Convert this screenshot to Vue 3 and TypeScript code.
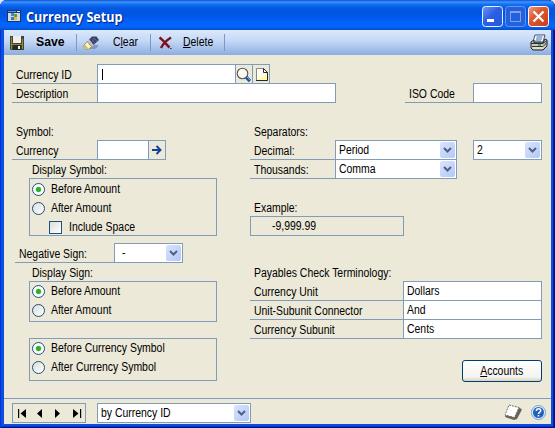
<script setup lang="ts">
import { ref } from 'vue'

interface TermRow {
  label: string
  value: string
}
interface RadioGroup {
  options: string[]
  selected: number
  kind: string
}

const separators = ref<TermRow[]>([
  { label: 'Decimal:', value: 'Period' },
  { label: 'Thousands:', value: 'Comma' },
])
const terms = ref<TermRow[]>([
  { label: 'Currency Unit', value: 'Dollars' },
  { label: 'Unit-Subunit Connector', value: 'And' },
  { label: 'Currency Subunit', value: 'Cents' },
])
const symbolGroup = ref<RadioGroup>({
  options: ['Before Amount', 'After Amount'],
  selected: 0,
  kind: 'tall',
})
const signGroups = ref<RadioGroup[]>([
  { options: ['Before Amount', 'After Amount'], selected: 0, kind: 'sign' },
  { options: ['Before Currency Symbol', 'After Currency Symbol'], selected: 0, kind: 'position' },
])
</script>

<template>
  <div class="window">
    <header class="titlebar">
      <svg class="app-icon" width="14" height="12" viewBox="0 0 14 12">
        <rect width="14" height="12" fill="#18366f" />
        <rect x="1" y="1" width="8" height="1" fill="#6d95d8" />
        <rect x="10" y="1" width="3" height="1" fill="#dce8fa" />
        <rect x="1" y="3" width="12" height="8" fill="#d5d9dc" />
        <rect x="4" y="3" width="3" height="3" fill="#3c8fc4" />
        <rect x="7" y="4" width="3" height="3" fill="#51a04b" />
        <rect x="4" y="7" width="3" height="3" fill="#2f78cf" />
        <rect x="7" y="7" width="3" height="3" fill="#e8b63b" />
      </svg>
      <span class="title">Currency Setup</span>
      <div class="controls">
        <svg width="21" height="21" viewBox="0 0 21 21">
          <defs>
            <linearGradient id="gb" x1="0" y1="0" x2="1" y2="1">
              <stop offset="0" stop-color="#6f99f5" /><stop offset=".45" stop-color="#2b60e4" /><stop offset="1" stop-color="#2858dc" />
            </linearGradient>
          </defs>
          <rect x=".5" y=".5" width="20" height="20" rx="3" fill="url(#gb)" stroke="#e9f0ff" />
          <rect x="5" y="13" width="7" height="3" fill="#fff" />
        </svg>
        <svg width="21" height="21" viewBox="0 0 21 21">
          <rect x=".5" y=".5" width="20" height="20" rx="3" fill="#2462dc" stroke="#6895f2" />
          <path d="M5.500 5.500h10v10h-10z" fill="none" stroke="#7f9ff0" />
          <path d="M5 6h11" stroke="#7f9ff0" stroke-width="2" />
        </svg>
        <svg width="21" height="21" viewBox="0 0 21 21">
          <defs>
            <linearGradient id="gr" x1="0" y1="0" x2="1" y2="1">
              <stop offset="0" stop-color="#f0a08a" /><stop offset=".4" stop-color="#e0572f" /><stop offset="1" stop-color="#c83c15" />
            </linearGradient>
          </defs>
          <rect x=".5" y=".5" width="20" height="20" rx="3" fill="url(#gr)" stroke="#fff" />
          <path d="M5.500 5.500l10 10M15.500 5.500l-10 10" stroke="#fff" stroke-width="2.300" />
        </svg>
      </div>
    </header>

    <nav class="toolbar">
      <svg class="i-save" width="14" height="14" viewBox="0 0 14 14">
        <path d="M0 0h14v14H1L0 13z" fill="#45442c" />
        <path d="M1 1h1v12H1zM12 3h1v10h-1zM2 8h10v1H2z" fill="#8b8944" />
        <rect x="3" y="0" width="8" height="7" fill="#eeeeea" />
        <rect x="3" y="9" width="8" height="5" fill="#292923" />
        <rect x="8" y="10" width="2" height="3" fill="#f4f4f0" />
      </svg>
      <span class="t save">Save</span>
      <i class="sep" />
      <svg class="i-clear" width="17" height="14" viewBox="0 0 17 14">
        <path d="M6 13l5-4h5l-2 2h1l-3 2z" fill="#8698ba" />
        <path d="M9 .5h4.500L16 4l-5.500 5L6 3.500z" fill="#39426f" />
        <path d="M10 2l4 3M8.500 3.500l3 3" stroke="#66749f" fill="none" />
        <path d="M6 3.500L10.500 9l-2 1.800L4 5.500z" fill="#c3c1b3" />
        <path d="M4 5.500l4.500 5.300-3 2.400H2L.5 10z" fill="#faf5c8" stroke="#77745c" stroke-width=".7" />
        <path d="M.5 10.500l2-1.500 2.500 3-1 1.500H2z" fill="#d9bd5a" />
      </svg>
      <span class="t clear">C<u>l</u>ear</span>
      <i class="sep" />
      <svg class="i-delete" width="15" height="14" viewBox="0 0 15 14">
        <path d="M1.500 1.500C5 4 8 8 11.500 11.500M13 1.500C9 4 5 8 3 12" fill="none" stroke="#7d1220" stroke-width="2.500" />
        <path d="M12 12.500h1.500" stroke="#333" />
      </svg>
      <span class="t delete"><u>D</u>elete</span>
      <i class="sep" />
      <svg class="i-print" width="18" height="17" viewBox="0 0 18 17">
        <path d="M5 1h10l-2 7H3z" fill="#fff" stroke="#2a3f68" stroke-width=".9" />
        <path d="M6.500 3h6M6 5h6M5 7h6" stroke="#3f64ae" />
        <path d="M1 8l3-2v3h9l2-4 2 1v6l-4 4H3l-2-2z" fill="#c9c9bf" stroke="#222" />
        <path d="M1 9.500h12l4-3M2 12.500h11l4-4" stroke="#33332e" fill="none" />
        <path d="M3 14h10" stroke="#f4f4ee" />
        <path d="M8 11h3" stroke="#23a427" stroke-width="1.500" />
      </svg>
    </nav>

    <main class="form">
      <section class="head">
        <div class="row">
          <div class="label w85"><span class="t">Currency ID</span></div>
          <div class="box id-box"><i class="caret" /></div>
          <div class="tool">
            <svg width="16" height="17" viewBox="0 0 16 17">
              <path d="M10 11l4 4" stroke="#1d4fa6" stroke-width="3.200" />
              <path d="M11 11l3 3" stroke="#7ab0ee" />
              <circle cx="6.500" cy="7.500" r="5.300" fill="#fbfaf2" stroke="#55555c" stroke-width="1.100" />
              <path d="M3.500 7a3 3 0 013-3" stroke="#fff" fill="none" />
            </svg>
          </div>
          <div class="tool">
            <svg width="15" height="17" viewBox="0 0 15 17">
              <path d="M2.500 2.500h7l4 4v8h-11z" fill="#fffba8" stroke="#8a8a80" />
              <path d="M3 3h7v5h2v1L4 13H3z" fill="#fffef2" />
              <path d="M2 14.500h11.500V6.500" fill="none" stroke="#26262a" />
              <path d="M9.500 2.500v4h4z" fill="#fffef2" stroke="#26262a" />
            </svg>
          </div>
        </div>
        <div class="row">
          <div class="label w85"><span class="t">Description</span></div>
          <div class="box desc-box" />
          <div class="label iso-label"><span class="t">ISO Code</span></div>
          <div class="box w69" />
        </div>
      </section>

      <div class="columns">
        <section class="left">
          <div class="caption"><span class="t">Symbol:</span></div>
          <div class="row">
            <div class="label w85"><span class="t">Currency</span></div>
            <div class="box sym-box" />
            <div class="tool go">
              <svg width="10" height="10" viewBox="0 0 10 10">
                <path d="M0 5h8M4.500 1l4 4-4 4" fill="none" stroke="#123f9e" stroke-width="1.900" />
              </svg>
            </div>
          </div>
          <div class="caption inner"><span class="t">Display Symbol:</span></div>
          <div class="group" :class="symbolGroup.kind">
            <div v-for="(o, i) in symbolGroup.options" :key="o" class="radio" @click="symbolGroup.selected = i">
              <i class="dot" :class="{ on: i === symbolGroup.selected }" /><span class="t">{{ o }}</span>
            </div>
            <div class="radio check"><i class="tick" /><span class="t">Include Space</span></div>
          </div>
          <div class="row neg">
            <div class="label neg-label"><span class="t">Negative Sign:</span></div>
            <div class="box w69 combo neg-box">
              <span class="t">-</span>
              <i class="drop"><svg width="9" height="6" viewBox="0 0 9 6"><path d="M1 1l3.500 3.500L8 1" /></svg></i>
            </div>
          </div>
          <div class="caption inner"><span class="t">Display Sign:</span></div>
          <div v-for="g in signGroups" :key="g.kind" class="group" :class="g.kind">
            <div v-for="(o, i) in g.options" :key="o" class="radio" @click="g.selected = i">
              <i class="dot" :class="{ on: i === g.selected }" /><span class="t">{{ o }}</span>
            </div>
          </div>
        </section>

        <section class="right">
          <div class="caption"><span class="t">Separators:</span></div>
          <div class="sep-area">
            <div>
              <div v-for="s in separators" :key="s.label" class="row">
                <div class="label w85"><span class="t">{{ s.label }}</span></div>
                <div class="box combo sep-box">
                  <span class="t">{{ s.value }}</span>
                  <i class="drop"><svg width="9" height="6" viewBox="0 0 9 6"><path d="M1 1l3.500 3.500L8 1" /></svg></i>
                </div>
              </div>
            </div>
            <div class="box w69 combo digits">
              <span class="t">2</span>
              <i class="drop"><svg width="9" height="6" viewBox="0 0 9 6"><path d="M1 1l3.500 3.500L8 1" /></svg></i>
            </div>
          </div>
          <div class="caption ex-cap"><span class="t">Example:</span></div>
          <div class="box example"><span class="t">-9,999.99</span></div>
          <div class="caption pay-cap"><span class="t">Payables Check Terminology:</span></div>
          <div v-for="r in terms" :key="r.label" class="row">
            <div class="label term-label"><span class="t">{{ r.label }}</span></div>
            <div class="box term-box"><span class="t">{{ r.value }}</span></div>
          </div>
          <button class="accounts"><span class="t"><u>A</u>ccounts</span></button>
        </section>
      </div>
    </main>

    <footer class="status">
      <div class="pager">
        <svg width="72" height="18" viewBox="0 0 72 18">
          <path d="M5 5h1.200v9H5zM13 5v9L7.500 9.500zM29 5v9l-5-4.500zM42 5v9l5-4.500zM60 5v9l5.500-4.500zM67 5h1.200v9H67z" fill="#000" />
        </svg>
      </div>
      <div class="box combo sort-box">
        <span class="t">by Currency ID</span>
        <i class="drop"><svg width="9" height="6" viewBox="0 0 9 6"><path d="M1 1l3.500 3.500L8 1" /></svg></i>
      </div>
      <svg class="i-note" width="20" height="17" viewBox="0 0 20 17">
        <path d="M5 1.500l10 2 3 2-5 9.500-3 1-9-3z" fill="#65655a" />
        <path d="M5 1l10 2.500-4.500 10L1 11z" fill="#fff" stroke="#65655a" stroke-width=".9" stroke-dasharray="2 1" />
      </svg>
      <svg class="i-help" width="15" height="15" viewBox="0 0 15 15">
        <circle cx="7.500" cy="7.500" r="7" fill="#e8f1fc" stroke="#6fa0d8" />
        <circle cx="7.500" cy="7.500" r="5.500" fill="#2361bd" />
        <path d="M5.300 5.900c0-3 4.400-2.800 4.400-.2 0 1.600-2.200 1.500-2.200 3.300M7.500 10v1.500" fill="none" stroke="#fff" stroke-width="1.500" />
      </svg>
    </footer>
  </div>
</template>

<style>
body {
  margin: 0;
  background: #dfe9f5;
}
</style>

<style scoped>
* {
  box-sizing: border-box;
}
.window {
  width: 555px;
  height: 428px;
  overflow: hidden;
  display: flex;
  flex-direction: column;
  padding: 0 4px 4px;
  background: #0a4fe0;
  border-radius: 7px 7px 0 0;
  box-shadow: inset 1px 0 #0831d9, inset -1px 0 #00138c, inset -2px 0 #001ea0, inset 0 -1px #00138c, inset 0 -2px #0434cc;
  font: 12px/19px "Liberation Sans", Arial, sans-serif;
  color: #000;
}
.t {
  display: inline-block;
  white-space: nowrap;
  transform: scaleX(0.87);
  transform-origin: left center;
}
u {
  text-decoration-thickness: 1px;
  text-underline-offset: 1px;
}
.titlebar {
  height: 30px;
  flex: none;
  margin: 0 -4px;
  display: flex;
  align-items: flex-start;
  padding: 0 6px 0 7px;
  background: linear-gradient(#0f53d0 0, #3f93ff 2px, #1674f5 4px, #0458e2 8px, #0054e3 14px, #0060f6 21px, #0267ff 26px, #0458dc 29px, #0345c5 30px);
}
.app-icon {
  margin-top: 10px;
}
.title {
  margin: 7px 0 0 5px;
  font: bold 14px/20px "Open Sans", "Noto Sans", sans-serif;
  color: #fff;
  text-shadow: 1px 1px 1px #0a1883;
  white-space: nowrap;
  transform: scaleX(0.9);
  transform-origin: left;
}
.controls {
  margin: 6px 0 0 auto;
  display: flex;
  gap: 2px;
}
.toolbar {
  height: 25px;
  flex: none;
  display: flex;
  align-items: center;
  background: linear-gradient(#dce9fc, #c3d7f5 45%, #8dade0);
}
.toolbar > * {
  flex: none;
}
.i-save {
  margin-left: 6px;
}
.save {
  margin-left: 12px;
  width: 40px;
  font-weight: bold;
  transform: scaleX(1.02);
}
.sep {
  width: 1px;
  height: 17px;
  background: #7b99c4;
}
.i-clear {
  margin-left: 6px;
}
.clear {
  margin-left: 13px;
  width: 37px;
}
.i-delete {
  margin-left: 7px;
}
.delete {
  margin-left: 10px;
  width: 41px;
}
.i-print {
  margin: 0 3px 0 auto;
}
.form {
  height: 343px;
  flex: none;
  padding: 9px 9px 0 8px;
  background: #ece9d8;
}
.row {
  display: flex;
  height: 20px;
}
.row + .row {
  margin-top: -1px;
}
.label {
  flex: none;
  height: 20px;
  padding: 2px 0 0 4px;
  border-bottom: 1px solid #7f9db9;
  line-height: 18px;
}
.label .t {
  line-height: 19px;
}
.w85 {
  width: 85px;
}
.w69 {
  width: 69px;
}
.box {
  flex: none;
  height: 20px;
  border: 1px solid #7f9db9;
  background: #fff;
  padding-left: 3px;
  line-height: 18px;
}
.id-box {
  width: 139px;
  padding: 4px 0 0 4px;
}
.caret {
  display: block;
  width: 1px;
  height: 11px;
  background: #000;
}
.desc-box {
  width: 239px;
}
.tool {
  flex: none;
  width: 18px;
  height: 20px;
  margin-left: -1px;
  border: 1px solid #7f9db9;
  display: flex;
  align-items: center;
  justify-content: center;
}
.iso-label {
  width: 68px;
  margin-left: 69px;
}
.columns {
  display: flex;
  justify-content: space-between;
  margin-top: 19px;
}
.left {
  width: 206px;
}
.right {
  width: 292px;
  display: flex;
  flex-direction: column;
}
.caption {
  height: 18px;
  padding-left: 4px;
  line-height: 20px;
}
.inner {
  padding-left: 20px;
}
.sym-box {
  width: 52px;
}
.group {
  margin-left: 17px;
  width: 188px;
  border: 1px solid #7f9db9;
  padding-left: 2px;
}
.tall {
  height: 58px;
  padding-top: 1px;
}
.sign {
  height: 41px;
}
.position {
  height: 43px;
  margin-top: 16px;
}
.radio {
  display: flex;
  align-items: center;
  height: 19px;
  gap: 6px;
}
.check {
  padding-left: 17px;
}
.dot,
.tick {
  flex: none;
  width: 13px;
  height: 13px;
  border: 1px solid #1c5180;
  background: linear-gradient(135deg, #dcdcd7, #fff);
}
.dot {
  border-radius: 50%;
}
.dot.on {
  background: radial-gradient(circle, #2eaf2b 0 2px, #5bc758 2.5px, #fff 3.2px);
}
.tick + .t {
  margin-left: 1px;
}
.neg {
  margin: 7px 0 0 3px;
}
.neg-label {
  width: 99px;
}
.combo {
  display: flex;
  align-items: center;
  justify-content: space-between;
  padding-right: 1px;
}
.neg-box {
  padding-left: 7px;
}
.drop {
  flex: none;
  width: 15px;
  height: 16px;
  border-radius: 2px;
  background: linear-gradient(135deg, #d9e4fd, #b3c8f6);
  display: flex;
  align-items: center;
  justify-content: center;
}
.drop path {
  fill: none;
  stroke: #4d6185;
  stroke-width: 2;
}
.sep-area {
  display: flex;
  justify-content: space-between;
}
.sep-box {
  width: 122px;
}
.ex-cap {
  margin-top: 19px;
}
.example {
  width: 154px;
  padding-left: 21px;
  background: transparent;
}
.pay-cap {
  margin-top: 27px;
}
.term-label {
  width: 153px;
}
.term-box {
  width: 139px;
}
.accounts {
  align-self: flex-end;
  margin-top: 21px;
  width: 80px;
  height: 22px;
  padding: 0;
  border: 1px solid #003c74;
  border-radius: 3px;
  background: linear-gradient(#fff, #f4f3ee 80%, #d8d2c4);
  font: inherit;
  line-height: 18px;
  color: #000;
}
.accounts .t {
  transform-origin: center;
}
.status {
  height: 26px;
  flex: none;
  display: flex;
  align-items: flex-start;
  padding: 4px 5px 0 8px;
  border-top: 1px solid #7f9db9;
  background: #ece9d8;
}
.pager {
  width: 74px;
  height: 20px;
  border: 1px solid #7f9db9;
  display: flex;
}
.sort-box {
  width: 154px;
  margin-left: 11px;
}
.i-note {
  margin: 1px 0 0 auto;
}
.i-help {
  margin: 2px 0 0 7px;
}
</style>
